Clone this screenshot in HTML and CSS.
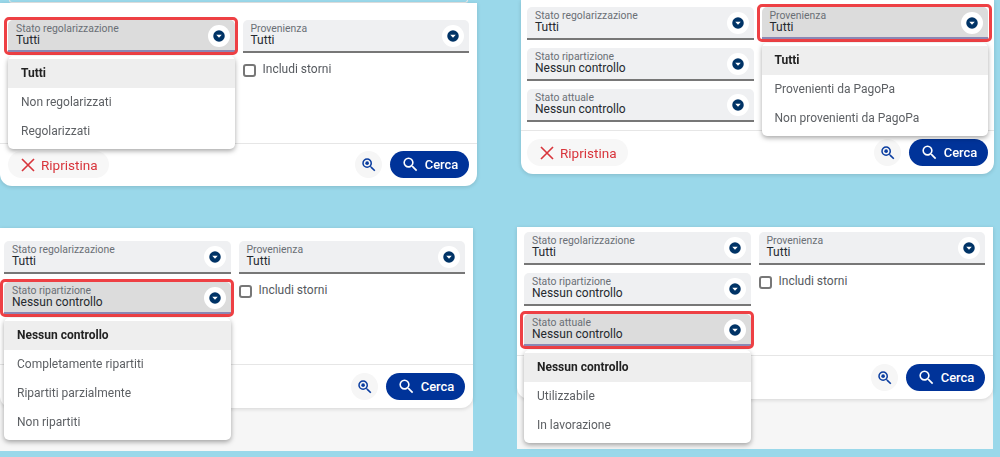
FILE: index.html
```html
<!DOCTYPE html>
<html lang="it">
<head>
<meta charset="utf-8">
<title>Filtri</title>
<link rel="stylesheet" href="styles.css">
</head>
<body>
<svg class="defs" width="0" height="0" aria-hidden="true">
  <symbol id="arrow" viewBox="0 0 24 24"><circle cx="12" cy="12" r="11.5" fill="#003366"/><path d="M6.5 9.5h11L12 15.5z" fill="#fff"/></symbol>
  <symbol id="search" viewBox="0 0 24 24"><path fill="currentColor" d="M15.5 14h-.79l-.28-.27A6.47 6.47 0 0 0 16 9.5 6.5 6.5 0 1 0 9.5 16c1.61 0 3.09-.59 4.23-1.57l.27.28v.79l5 4.99L20.49 19l-4.99-5zm-6 0C7.01 14 5 11.99 5 9.5S7.01 5 9.5 5 14 7.01 14 9.5 11.99 14 9.5 14z"/></symbol>
  <symbol id="zoom" viewBox="0 0 24 24"><path fill="currentColor" d="M15.5 14h-.79l-.28-.27A6.47 6.47 0 0 0 16 9.5 6.5 6.5 0 1 0 9.5 16c1.61 0 3.09-.59 4.23-1.57l.27.28v.79l5 4.99L20.49 19l-4.99-5zm-6 0C7.01 14 5 11.99 5 9.5S7.01 5 9.5 5 14 7.01 14 9.5 11.99 14 9.5 14z"/><circle cx="9.5" cy="9.5" r="2.4" fill="currentColor"/></symbol>
  <symbol id="close" viewBox="0 0 24 24"><path fill="none" stroke="currentColor" stroke-width="2.2" d="M4 4l16 16M20 4L4 20"/></symbol>
</svg>

<section class="panel p1">
  <div class="prev-card"></div>
  <div class="card">
    <div class="grid">
      <div class="field active">
        <span class="lbl">Stato regolarizzazione</span><span class="val">Tutti</span>
        <span class="arrow"><svg><use href="#arrow"/></svg></span>
        <ul class="menu">
          <li class="sel">Tutti</li><li>Non regolarizzati</li><li>Regolarizzati</li>
        </ul>
      </div>
      <div class="field">
        <span class="lbl">Provenienza</span><span class="val">Tutti</span>
        <span class="arrow"><svg><use href="#arrow"/></svg></span>
      </div>
      <label class="check col2"><span class="box"></span>Includi storni</label>
    </div>
    <footer class="foot">
      <button class="reset"><svg><use href="#close"/></svg>Ripristina</button>
      <button class="icon-btn"><svg><use href="#zoom"/></svg></button>
      <button class="search"><svg><use href="#search"/></svg>Cerca</button>
    </footer>
  </div>
</section>

<section class="panel p2">
  <div class="card">
    <div class="grid">
      <div class="field">
        <span class="lbl">Stato regolarizzazione</span><span class="val">Tutti</span>
        <span class="arrow"><svg><use href="#arrow"/></svg></span>
      </div>
      <div class="field active">
        <span class="lbl">Provenienza</span><span class="val">Tutti</span>
        <span class="arrow"><svg><use href="#arrow"/></svg></span>
        <ul class="menu">
          <li class="sel">Tutti</li><li>Provenienti da PagoPa</li><li>Non provenienti da PagoPa</li>
        </ul>
      </div>
      <div class="field">
        <span class="lbl">Stato ripartizione</span><span class="val">Nessun controllo</span>
        <span class="arrow"><svg><use href="#arrow"/></svg></span>
      </div>
      <div class="field col1">
        <span class="lbl">Stato attuale</span><span class="val">Nessun controllo</span>
        <span class="arrow"><svg><use href="#arrow"/></svg></span>
      </div>
    </div>
    <footer class="foot">
      <button class="reset"><svg><use href="#close"/></svg>Ripristina</button>
      <button class="icon-btn"><svg><use href="#zoom"/></svg></button>
      <button class="search"><svg><use href="#search"/></svg>Cerca</button>
    </footer>
  </div>
</section>

<section class="panel p3">
  <div class="card">
    <div class="grid">
      <div class="field">
        <span class="lbl">Stato regolarizzazione</span><span class="val">Tutti</span>
        <span class="arrow"><svg><use href="#arrow"/></svg></span>
      </div>
      <div class="field">
        <span class="lbl">Provenienza</span><span class="val">Tutti</span>
        <span class="arrow"><svg><use href="#arrow"/></svg></span>
      </div>
      <div class="field active">
        <span class="lbl">Stato ripartizione</span><span class="val">Nessun controllo</span>
        <span class="arrow"><svg><use href="#arrow"/></svg></span>
        <ul class="menu">
          <li class="sel">Nessun controllo</li><li>Completamente ripartiti</li><li>Ripartiti parzialmente</li><li>Non ripartiti</li>
        </ul>
      </div>
      <label class="check"><span class="box"></span>Includi storni</label>
    </div>
    <footer class="foot">
      <button class="icon-btn"><svg><use href="#zoom"/></svg></button>
      <button class="search"><svg><use href="#search"/></svg>Cerca</button>
    </footer>
  </div>
</section>

<section class="panel p4">
  <div class="card">
    <div class="grid">
      <div class="field">
        <span class="lbl">Stato regolarizzazione</span><span class="val">Tutti</span>
        <span class="arrow"><svg><use href="#arrow"/></svg></span>
      </div>
      <div class="field">
        <span class="lbl">Provenienza</span><span class="val">Tutti</span>
        <span class="arrow"><svg><use href="#arrow"/></svg></span>
      </div>
      <div class="field">
        <span class="lbl">Stato ripartizione</span><span class="val">Nessun controllo</span>
        <span class="arrow"><svg><use href="#arrow"/></svg></span>
      </div>
      <label class="check"><span class="box"></span>Includi storni</label>
      <div class="field active">
        <span class="lbl">Stato attuale</span><span class="val">Nessun controllo</span>
        <span class="arrow"><svg><use href="#arrow"/></svg></span>
        <ul class="menu">
          <li class="sel">Nessun controllo</li><li>Utilizzabile</li><li>In lavorazione</li>
        </ul>
      </div>
    </div>
    <footer class="foot">
      <button class="icon-btn"><svg><use href="#zoom"/></svg></button>
      <button class="search"><svg><use href="#search"/></svg>Cerca</button>
    </footer>
  </div>
</section>
</body>
</html>
```

FILE: styles.css
```css
* { box-sizing: border-box; }
html, body { margin: 0; height: 100%; }
body {
  position: relative;
  width: 1000px;
  height: 457px;
  overflow: hidden;
  background: #9ad8ea;
  font-family: Roboto, "Liberation Sans", sans-serif;
  color: #222;
}
.defs { position: absolute; }

/* Each panel is a separate, slightly soft screenshot placed on the collage */
.panel { position: absolute; filter: blur(.3px); }
.p1 { left: 0; top: 0; width: 477px; height: 187px; }
.p2 { left: 521px; top: 0; width: 473px; height: 175px; }
.p3 { left: 0; top: 228px; width: 473px; height: 223px; background: #f6f6f6; }
.p4 { left: 517px; top: 227px; width: 476px; height: 222px; background: #f6f6f6; }

.prev-card {
  height: 3px;
  margin: 0 9px;
  border: 1px solid #e4e4e4;
  border-top: 0;
  border-radius: 0 0 6px 6px;
}
.card {
  background: #fff;
  border-radius: 0 0 12px 12px;
  box-shadow: 0 1px 4px rgba(0, 0, 0, .14);
}
.p1 .card { height: 183px; }
.p2 .card { height: 174px; }

.grid {
  display: grid;
  grid-template-columns: 1fr 1fr;
  grid-template-rows: repeat(3, 33px);
  gap: 8px;
  padding-bottom: 8px;
}
.p1 .grid { padding: 17px 8px 8px; }
.p2 .grid { padding: 7px 6px 8px; }
.p3 .grid { padding: 13px 8px 8px 4px; }
.p4 .grid { padding: 5px 8px 8px 7px; }
.col1 { grid-column: 1; }
.p1 .check { grid-column: 2; grid-row: 2; }

.field {
  position: relative;
  display: flex;
  flex-direction: column;
  padding: 3px 0 0 8px;
  background: #eff0f2;
  border-bottom: 2px solid #777;
  border-radius: 5px 5px 0 0;
}
.lbl {
  font-size: 10.4px;
  line-height: 12px;
  color: #6a6f75;
}
.val {
  font-size: 12px;
  line-height: 14px;
  color: #24292e;
  margin-top: -2px;
}
.arrow {
  position: absolute;
  right: 5px;
  top: 5px;
  width: 22px;
  height: 22px;
  padding: 5px;
  border-radius: 50%;
  background: #fff;
}
.arrow svg { display: block; width: 12px; height: 12px; }

.active {
  background: #dcdcdc;
  border-bottom: 0;
  box-shadow: inset 0 -3px 0 #8a88b4;
}
.active::after {
  content: "";
  position: absolute;
  inset: -3.5px -3.5px -1.5px -4.5px;
  border: 3.5px solid #ee4044;
  border-radius: 5px;
  pointer-events: none;
}

.menu {
  position: absolute;
  z-index: 3;
  left: 0;
  right: 0;
  top: 36px;
  margin: 0;
  padding: 3px 0;
  list-style: none;
  background: #fff;
  border-radius: 5px;
  box-shadow: 0 2px 5px rgba(0, 0, 0, .35);
}
.menu li {
  height: 29px;
  padding-left: 13px;
  font-size: 12px;
  line-height: 28px;
  color: #5d6064;
}
.menu .sel { background: #eeeeee; color: #222; font-weight: 700; }

.check {
  display: flex;
  align-items: flex-start;
  gap: 7px;
  padding-top: 1px;
  font-size: 12px;
  line-height: 14px;
  color: #55595e;
}
.box {
  flex: none;
  width: 13px;
  height: 13px;
  margin-top: 2px;
  border: 2px solid #777;
  border-radius: 3px;
  background: #fff;
}

.foot {
  display: flex;
  align-items: center;
  gap: 8px;
  padding: 8px;
  border-top: 1px solid #e6e6e6;
}
.p1 .foot { padding-top: 7px; }
.p2 .foot { padding: 8px 6px; }
.foot button {
  display: flex;
  align-items: center;
  height: 27px;
  border: 0;
  border-radius: 14px;
  padding: 0;
  font-family: inherit;
}
.foot .reset {
  width: 101px;
  padding-left: 11px;
  gap: 4px;
  background: #f7f7f7;
  color: #d8353c;
  font-size: 13.5px;
}
.reset svg { width: 18px; height: 18px; flex: none; }
.icon-btn {
  margin-left: auto;
  width: 27px;
  justify-content: center;
  background: #f6f6f6;
  color: #0a3da0;
}
.icon-btn svg { width: 18px; height: 18px; }
.search {
  width: 79px;
  justify-content: center;
  gap: 5px;
  background: #003399;
  color: #fff;
  font-size: 13px;
  font-weight: 500;
}
.search svg { width: 19px; height: 19px; flex: none; }
```
